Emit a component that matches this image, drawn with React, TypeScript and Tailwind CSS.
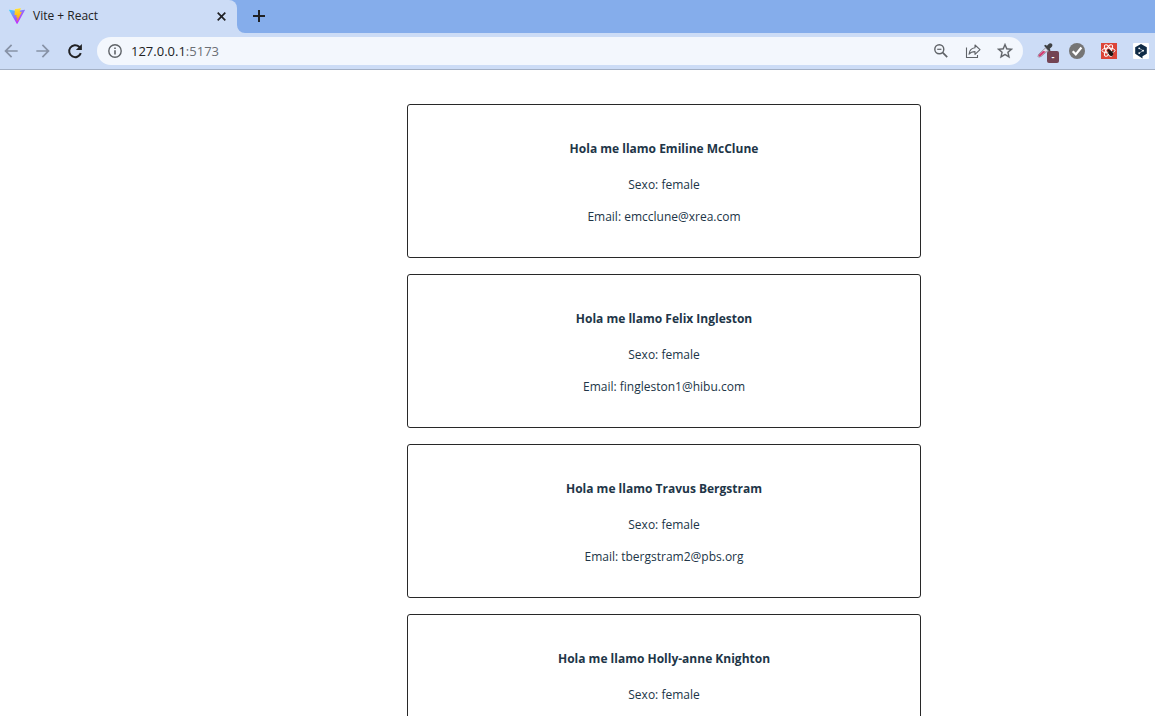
import React from 'react';

type Person = { name: string; gender: string; email: string };

const people: Person[] = [
  { name: 'Emiline McClune', gender: 'female', email: 'emcclune@xrea.com' },
  { name: 'Felix Ingleston', gender: 'female', email: 'fingleston1@hibu.com' },
  { name: 'Travus Bergstram', gender: 'female', email: 'tbergstram2@pbs.org' },
  { name: 'Holly-anne Knighton', gender: 'female', email: '' },
];

function ViteLogo() {
  return (
    <svg className="size-4 shrink-0" viewBox="0 0 256 257" aria-hidden="true">
      <defs>
        <linearGradient id="vite-body" x1="0" x2="0.58" y1="0.08" y2="0.79">
          <stop offset="0" stopColor="#41d1ff" />
          <stop offset="1" stopColor="#bd34fe" />
        </linearGradient>
        <linearGradient id="vite-bolt" x1="0.43" x2="0.5" y1="0.02" y2="0.89">
          <stop offset="0" stopColor="#ffea83" />
          <stop offset="0.08" stopColor="#ffdd35" />
          <stop offset="1" stopColor="#ffa800" />
        </linearGradient>
      </defs>
      <path fill="url(#vite-body)" d="M255.153 37.938 134.897 252.976c-2.483 4.44-8.862 4.466-11.382.048L.875 37.958c-2.746-4.814 1.371-10.646 6.827-9.67l120.385 21.517a6.537 6.537 0 0 0 2.322-.004l117.867-21.483c5.438-.991 9.574 4.796 6.877 9.62Z" />
      <path fill="url(#vite-bolt)" d="M185.432.063 96.44 17.501a3.268 3.268 0 0 0-2.634 3.014l-5.474 92.456a3.268 3.268 0 0 0 3.997 3.378l24.777-5.718c2.318-.535 4.413 1.507 3.936 3.838l-7.361 36.047c-.495 2.426 1.782 4.5 4.151 3.78l15.304-4.649c2.372-.72 4.652 1.36 4.15 3.788l-11.698 56.621c-.732 3.542 3.979 5.473 5.943 2.437l1.313-2.028 72.516-144.72c1.215-2.423-.88-5.186-3.54-4.672l-25.505 4.922c-2.396.462-4.435-1.77-3.759-4.114l16.646-57.705c.677-2.35-1.37-4.583-3.769-4.113Z" />
    </svg>
  );
}

function Material({ d, className }: { d: string; className: string }) {
  return (
    <svg className={`shrink-0 ${className}`} viewBox="0 0 24 24" fill="currentColor" aria-hidden="true">
      <path d={d} />
    </svg>
  );
}

function TabStrip() {
  return (
    <div className="flex h-[33px] bg-[#85adeb]">
      <div className="relative flex w-[237px] items-center rounded-tr-lg bg-[#ccdcf6] pr-2 pb-px pl-[9px]">
        <ViteLogo />
        <span className="ml-2 flex-1 text-[12px] leading-4 text-[#222]">Vite + React</span>
        <button type="button" aria-label="Close tab" className="flex size-4 items-center justify-center text-[#202124]">
          <svg className="size-[9px]" viewBox="0 0 9 9" stroke="currentColor" strokeWidth="1.7" aria-hidden="true">
            <path d="M.7.7l7.6 7.6M8.3.7L.7 8.3" />
          </svg>
        </button>
        <svg className="absolute bottom-0 left-full size-2" viewBox="0 0 8 8" fill="#ccdcf6" aria-hidden="true">
          <path d="M0 0v8h8A8 8 0 0 1 0 0z" />
        </svg>
      </div>
      <button type="button" aria-label="New tab" className="ml-3 flex w-5 items-center justify-center pb-px text-[#202124]">
        <svg className="size-3" viewBox="0 0 12 12" stroke="currentColor" strokeWidth="2" aria-hidden="true">
          <path d="M6 0v12M0 6h12" />
        </svg>
      </button>
    </div>
  );
}

function Extensions() {
  return (
    <div className="flex shrink-0 items-center gap-4 pl-[14px]">
      <button type="button" aria-label="Color picker" className="relative size-4">
        <svg className="size-4" viewBox="0 0 16 16" aria-hidden="true">
          <path d="M8.6 4.9l2.5 2.5-6.9 6-2.5.8-.7-.8.8-2.3z" fill="#dfe3ee" stroke="#8b7f8e" strokeWidth=".8" />
          <path d="M6 8l2.8.6-4.900 4.500-1.900.6-.5-.6.7-1.600z" fill="#d03a72" />
          <path d="M7 2.800l1.400-1.100 1.600 1L11.400 1.200c1.100-1.200 2.600-1.100 3.400-.4.900.8.8 2.200-.2 3.200l-1.900 1.800.9 1.500-1.300 1.200z" fill="#3f4143" />
        </svg>
        <span className="absolute top-2 left-[10px] flex h-3 w-3 items-center justify-center rounded-xs bg-[#744454] text-[9px] leading-3 font-bold text-white">-</span>
      </button>
      <button type="button" aria-label="Checker" className="size-4">
        <svg className="size-4" viewBox="0 0 16 16" aria-hidden="true">
          <circle cx="8" cy="8" r="8" fill="#757575" />
          <path d="M3.7 8.3l3.1 3.1 5.600-6.800" fill="none" stroke="#fff" strokeWidth="2.3" />
        </svg>
      </button>
      <button type="button" aria-label="React Developer Tools" className="size-4">
        <svg className="size-4" viewBox="0 0 16 16" aria-hidden="true">
          <path fill="#dc4437" d="M0 0h16v16H0z" />
          <g fill="none" stroke="#fff" strokeWidth="1">
            <ellipse cx="7.5" cy="7.5" rx="6.5" ry="2.5" />
            <ellipse cx="7.5" cy="7.5" rx="6.5" ry="2.5" transform="rotate(60 7.5 7.5)" />
            <ellipse cx="7.5" cy="7.5" rx="6.5" ry="2.5" transform="rotate(120 7.5 7.5)" />
          </g>
          <ellipse cx="9.8" cy="10.3" rx="2" ry="2.9" fill="#1d1513" transform="rotate(-35 9.8 10.3)" />
          <circle cx="7.6" cy="7.4" r="1.2" fill="#1d1513" />
          <path d="M6.3 10.2l6.600-1.500M7.800 12.600l4.400-5M9 7l2 6.400" stroke="#1d1513" strokeWidth=".7" />
        </svg>
      </button>
      <button type="button" aria-label="Translator" className="size-4">
        <svg className="size-4" viewBox="0 0 16 16" aria-hidden="true">
          <rect width="16" height="16" rx="1" fill="#fff" />
          <path fill="#0f2b46" d="M8 1l5.8 3.2v6.600L9.500 13.200V15.400L2.200 10.800V4.200z" />
          <path d="M6.3 5.4l3.8 2.3-3.800 2.300" fill="none" stroke="#fff" strokeWidth=".6" />
          <g fill="#fff">
            <circle cx="6.2" cy="5.3" r=".9" />
            <circle cx="10.1" cy="7.7" r=".9" />
            <circle cx="6.2" cy="10.1" r=".9" />
          </g>
        </svg>
      </button>
    </div>
  );
}

function Toolbar() {
  return (
    <div className="flex h-[37px] items-center border-b border-[#a3b0c5] bg-[#ccdcf6] pr-[6px]">
      <div className="flex shrink-0 items-center gap-3 pl-px">
        <button type="button" aria-label="Back" className="text-[#8792a6]">
          <Material className="size-5" d="M20 11H7.83l5.59-5.59L12 4l-8 8 8 8 1.41-1.41L7.83 13H20v-2z" />
        </button>
        <button type="button" aria-label="Forward" className="text-[#8792a6]">
          <Material className="size-5" d="M12 4l-1.41 1.41L16.17 11H4v2h12.17l-5.58 5.59L12 20l8-8z" />
        </button>
        <button type="button" aria-label="Reload" className="text-[#202124]">
          <svg className="size-5" viewBox="0 0 20 20" aria-hidden="true">
            <path d="M15.8 12.2A6 6 0 1 1 14.2 5.7l1.3 1.3" fill="none" stroke="currentColor" strokeWidth="2" />
            <path d="M16.9 3v6h-6z" fill="currentColor" />
          </svg>
        </button>
      </div>
      <div className="ml-3 flex h-7 min-w-0 flex-1 items-center rounded-full bg-[#f3f7fd] pr-[10px] pl-[10px] text-[#5f6368]">
        <svg className="size-4 shrink-0" viewBox="0 0 16 16" fill="none" stroke="currentColor" aria-hidden="true">
          <circle cx="8" cy="8" r="6.2" strokeWidth="1.4" />
          <path d="M8 4.5v1.6M8 7.2v4.3" strokeWidth="1.6" />
        </svg>
        <span className="ml-2 flex-1 text-[13px] leading-5 text-[#6b6f75]">
          <span className="text-[#202124]">127.0.0.1</span>:5173
        </span>
        <div className="flex items-center gap-4">
          <button type="button" aria-label="Zoom" className="size-4">
            <svg className="size-4" viewBox="0 0 16 16" fill="none" stroke="currentColor" aria-hidden="true">
              <circle cx="6.3" cy="6.3" r="4.5" strokeWidth="1.4" />
              <path d="M9.7 9.7l4.5 4.5" strokeWidth="1.7" />
              <path d="M4.2 6.3h4.2" strokeWidth="1.2" />
            </svg>
          </button>
          <button type="button" aria-label="Share" className="size-4">
            <svg className="size-4" viewBox="0 0 16 16" fill="none" stroke="currentColor" strokeWidth="1.1" aria-hidden="true">
              <path d="M1.5 4.5v10h11v-2.6" />
              <path d="M10 2l5 4.7-5 4.6V8.6c-2.8 0-4.6.8-6 2.6.4-3.4 2.3-6 6-6.4z" strokeLinejoin="round" />
            </svg>
          </button>
          <button type="button" aria-label="Bookmark" className="size-4">
            <svg className="size-4" viewBox="2 2 20 20" fill="currentColor" stroke="currentColor" strokeWidth=".2" overflow="visible" aria-hidden="true">
              <path d="M22 9.24l-7.19-.62L12 2 9.19 8.63 2 9.24l5.46 4.73L5.82 21 12 17.27 18.18 21l-1.63-7.03L22 9.24zM12 15.4l-3.76 2.27 1-4.28-3.32-2.88 4.38-.38L12 6.1l1.71 4.04 4.38.38-3.32 2.88 1 4.28L12 15.4z" />
            </svg>
          </button>
        </div>
      </div>
      <Extensions />
    </div>
  );
}

function PersonCard({ person }: { person: Person }) {
  return (
    <article className="min-h-[154px] shrink-0 rounded-[3px] border border-[#282828] px-8 pt-8 pb-[31px] text-center text-[#213547]">
      <h2 className="text-[12px] leading-6 font-bold">Hola me llamo {person.name}</h2>
      <p className="mt-[15px] text-[12px] leading-[18px]">Sexo: {person.gender}</p>
      {person.email && <p className="mt-[14px] text-[12px] leading-[18px]">Email: {person.email}</p>}
    </article>
  );
}

export default function App() {
  return (
    <div className="flex h-screen flex-col overflow-hidden bg-white font-['Segoe_UI','Open_Sans',sans-serif]">
      <header className="shrink-0">
        <TabStrip />
        <Toolbar />
      </header>
      <main className="flex min-h-0 flex-1 justify-center overflow-hidden pt-[34px] pl-[173px]">
        <div className="flex w-full max-w-[514px] flex-col gap-4">
          {people.map((person) => (
            <PersonCard key={person.name} person={person} />
          ))}
        </div>
      </main>
    </div>
  );
}
